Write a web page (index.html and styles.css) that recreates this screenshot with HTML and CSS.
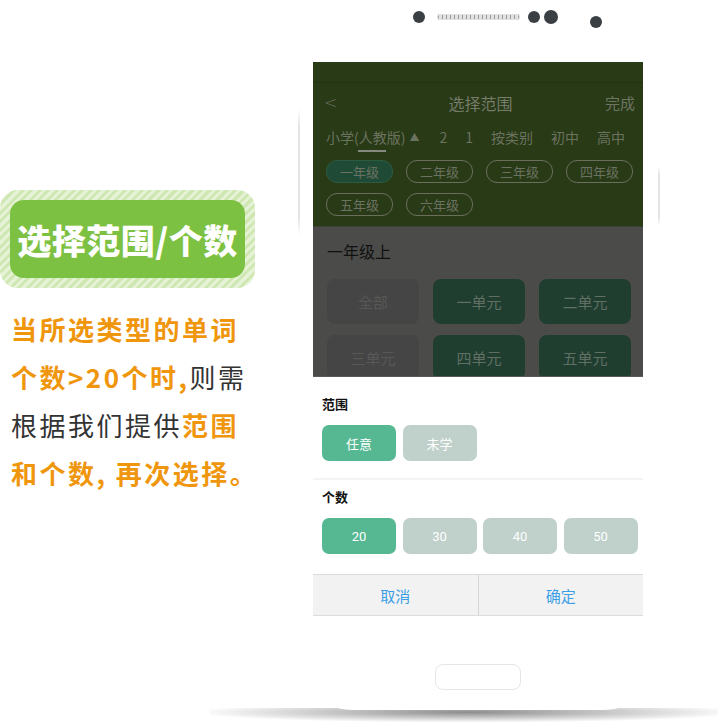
FILE: index.html
```html
<!DOCTYPE html>
<html lang="zh-CN">
<head>
    <meta charset="UTF-8">
    <meta name="viewport" content="width=device-width, initial-scale=1.0">
    <title>选择范围/个数</title>
    <link rel="stylesheet" href="styles.css">
</head>
<body>
    <div id="intro">
        <div class="badge">
            <div class="badge-inner">选择范围/个数</div>
        </div>
        <div class="desc">
            <div><span class="hl">当所选类型的单词</span></div>
            <div><span class="hl">个数&gt;20个时,</span>则需</div>
            <div>根据我们提供<span class="hl">范围</span></div>
            <div><span class="hl">和个数, 再次选择。</span></div>
        </div>
    </div>

    <div id="phone">
        <div class="phone-top">
            <span class="dot"></span>
            <span class="speaker"></span>
            <span class="dot small"></span>
            <span class="dot big"></span>
            <span class="dot low"></span>
        </div>

        <div id="screen">
            <div class="statusbar"></div>
            <div class="navbar">
                <span class="back">&lt;</span>
                <span class="title">选择范围</span>
                <span class="done">完成</span>
            </div>
            <div class="tabs">
                <span class="tab active">小学(人教版)<i class="tri">▲</i></span>
                <span class="tab">2</span>
                <span class="tab">1</span>
                <span class="tab">按类别</span>
                <span class="tab">初中</span>
                <span class="tab">高中</span>
            </div>
            <div class="grades">
                <span class="chip on">一年级</span>
                <span class="chip">二年级</span>
                <span class="chip">三年级</span>
                <span class="chip">四年级</span>
                <span class="chip">五年级</span>
                <span class="chip">六年级</span>
            </div>

            <div class="units">
                <h3>一年级上</h3>
                <div class="unit-grid">
                    <span class="unit all">全部</span>
                    <span class="unit">一单元</span>
                    <span class="unit">二单元</span>
                    <span class="unit all">三单元</span>
                    <span class="unit">四单元</span>
                    <span class="unit">五单元</span>
                </div>
            </div>

            <div class="sheet">
                <div class="group">
                    <h4>范围</h4>
                    <div class="opts">
                        <span class="opt on">任意</span>
                        <span class="opt">未学</span>
                    </div>
                </div>
                <div class="group">
                    <h4>个数</h4>
                    <div class="opts">
                        <span class="opt num on">20</span>
                        <span class="opt num">30</span>
                        <span class="opt num">40</span>
                        <span class="opt num">50</span>
                    </div>
                </div>
            </div>
            <div class="actions">
                <span>取消</span>
                <span>确定</span>
            </div>
        </div>

        <div class="home-btn"></div>
    </div>
</body>
</html>
```

FILE: styles.css
```css
body {
    margin: 0;
    width: 718px;
    height: 722px;
    overflow: hidden;
    display: flex;
    background-color: #fff;
    font-family: "Noto Sans CJK SC", sans-serif;
}

/* left column */
#intro {
    width: 290px;
    flex-shrink: 0;
    padding-top: 190px;
}
.badge {
    width: 235px;
    height: 78px;
    padding: 10px;
    border-radius: 18px;
    background: repeating-linear-gradient(135deg, #e6f2d6 0 3px, #cfe7b3 3px 6px);
}
.badge-inner {
    height: 100%;
    border-radius: 14px;
    background-color: #7dc142;
    color: #fff;
    font-size: 34px;
    font-weight: 900;
    display: flex;
    align-items: center;
    justify-content: center;
    letter-spacing: 0.5px;
}
.desc {
    margin-top: 17px;
    padding-left: 11px;
    font-size: 26px;
    line-height: 48px;
    letter-spacing: 2.5px;
    color: #333;
    white-space: nowrap;
}
.desc .hl {
    color: #ef960c;
    font-weight: 700;
}

/* phone */
#phone {
    position: relative;
    width: 376px;
    height: 710px;
    flex-shrink: 0;
    background-color: #fff;
    border-radius: 0 0 64px 64px;
    display: flex;
    flex-direction: column;
    align-items: center;
}
#phone::before {
    content: "";
    position: absolute;
    left: 8px;
    top: 108px;
    width: 2px;
    height: 128px;
    background: linear-gradient(#fff, #e4e4e4 15%, #e4e4e4 85%, #fff);
}
#phone::after {
    content: "";
    position: absolute;
    left: -80px;
    right: -60px;
    bottom: -12px;
    height: 14px;
    z-index: -1;
    background: radial-gradient(ellipse at 50% 30%, rgba(0,0,0,.45), rgba(0,0,0,.12) 55%, rgba(0,0,0,0) 75%);
}
.phone-top {
    height: 62px;
    width: 100%;
    display: flex;
    align-items: flex-start;
    padding-top: 11px;
    padding-left: 123px;
    box-sizing: border-box;
}
.dot {
    width: 12px;
    height: 12px;
    border-radius: 50%;
    background-color: #3a3f44;
}
.dot.small {
    margin-left: 8px;
}
.dot.big {
    width: 14px;
    height: 14px;
    margin-left: 4px;
    margin-top: -1px;
}
.dot.low {
    margin-left: 32px;
    margin-top: 5px;
}
.speaker {
    width: 83px;
    height: 6px;
    margin: 3px 0 0 12px;
    border-radius: 3px;
    background: repeating-linear-gradient(90deg, #e2e2e2 0 1px, #9a9a9a 1px 2px, #e2e2e2 2px 4px);
    box-shadow: inset 0 0 0 1px #e2e2e2;
}

#screen {
    width: 330px;
    height: 554px;
    display: flex;
    flex-direction: column;
    position: relative;
}
#screen::after {
    content: "";
    position: absolute;
    right: -17px;
    top: 104px;
    width: 2px;
    height: 60px;
    background: linear-gradient(#fff, #e4e4e4 15%, #e4e4e4 85%, #fff);
}
.statusbar {
    height: 20px;
    background-color: #283a16;
    border-bottom: 1px solid #22330f;
}
.navbar {
    height: 39px;
    background-color: #283a16;
    display: flex;
    align-items: center;
    justify-content: space-between;
    padding: 0 8px 0 11px;
    color: #6e7462;
    font-size: 15px;
}
.navbar .back {
    font-family: "DejaVu Sans", sans-serif;
    font-size: 16px;
    font-weight: 300;
    width: 32px;
}
.navbar .title {
    font-size: 16px;
    color: #767b6a;
}
.tabs {
    height: 30px;
    padding-bottom: 3px;
    background-color: #283a16;
    display: flex;
    align-items: center;
    gap: 18px;
    padding-left: 13px;
    color: #6b725f;
    font-size: 14px;
    white-space: nowrap;
    overflow: hidden;
}
.tab.active {
    position: relative;
}
.tab.active::after {
    content: "";
    position: absolute;
    left: 32px;
    width: 28px;
    bottom: -5px;
    height: 2px;
    background-color: #868a7e;
}
.tab .tri {
    font-style: normal;
    font-size: 10px;
    margin-left: 4px;
    margin-right: 2px;
    vertical-align: 2px;
}
.grades {
    background-color: #283a16;
    display: flex;
    flex-wrap: wrap;
    gap: 10px 13px;
    padding: 5px 10px 10px 13px;
    border-bottom: 1px solid #3c3f38;
}
.chip {
    width: 65px;
    height: 21px;
    border: 1px solid #6a6f5c;
    border-radius: 11px;
    color: #6c7262;
    font-size: 13px;
    display: flex;
    align-items: center;
    justify-content: center;
}
.chip.on {
    background-color: #1f4a36;
    border-color: #2d5b40;
}

.units {
    height: 149px;
    background-color: #4b4c4a;
    padding: 0 12px 0 14px;
    overflow: hidden;
}
.units h3 {
    margin: 12px 0 16px;
    font-size: 16px;
    font-weight: 400;
    color: #111;
}
.unit-grid {
    display: grid;
    grid-template-columns: repeat(3, 92px);
    gap: 11px 14px;
}
.unit {
    height: 45px;
    border-radius: 8px;
    background-color: #1f3e2f;
    color: #5f6f64;
    font-size: 15px;
    display: flex;
    align-items: center;
    justify-content: center;
}
.unit.all {
    background-color: #444544;
    color: #575857;
}

.sheet {
    height: 198px;
    background-color: #fff;
    border-top: 1px solid #5a5a5a;
    box-sizing: border-box;
}
.group {
    padding: 18px 6px 17px 9px;
}
.group + .group {
    border-top: 2px solid #f4f4f4;
    padding-top: 8px;
}
.group h4 {
    margin: 0 0 12px;
    line-height: 18px;
    font-size: 13px;
    font-weight: 700;
    color: #111;
}
.opts {
    display: flex;
    gap: 6.5px;
}
.opt {
    width: 74px;
    height: 36px;
    flex-shrink: 0;
    border-radius: 7px;
    background-color: #c0d0ca;
    color: #fff;
    font-size: 13px;
    display: flex;
    align-items: center;
    justify-content: center;
}
.opt.num {
    font-family: Roboto, sans-serif;
}
.opt.on {
    background-color: #56b892;
}

.actions {
    height: 40px;
    display: flex;
    background-color: #f2f2f2;
    border-top: 1px solid #dcdcdc;
    border-bottom: 1px solid #dcdcdc;
}
.actions span {
    flex: 1;
    display: flex;
    align-items: center;
    justify-content: center;
    color: #3a9fe6;
    font-size: 15px;
}
.actions span + span {
    border-left: 1px solid #d6d6d6;
}

.home-btn {
    margin-top: 48px;
    width: 84px;
    height: 24px;
    border: 1px solid #e6e6e6;
    border-radius: 8px;
}
```
